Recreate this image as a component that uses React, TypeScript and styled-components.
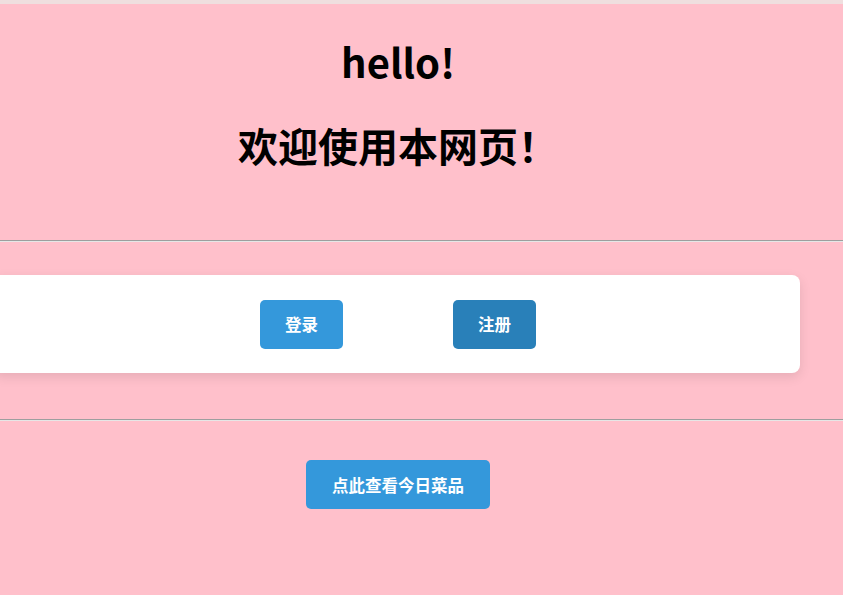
import React from 'react';
import styled, { createGlobalStyle } from 'styled-components';

const GlobalStyle = createGlobalStyle`
  html, body {
    margin: 0;
    padding: 0;
    background: pink;
    overflow: hidden;
  }
  body {
    font-family: "Noto Sans CJK SC", "Noto Sans", sans-serif;
  }
`;

const Page = styled.div`
  width: 843px;
  height: 595px;
  background: pink;
  border-top: 4px solid #efdfdf;
  box-sizing: border-box;
  overflow: hidden;
`;

const Content = styled.div`
  width: 796px;
`;

const Header = styled.header`
  padding-top: 28px;
  padding-bottom: 66px;
  text-align: center;
`;

const Title = styled.h1`
  margin: 0 0 26px;
  font-size: 40px;
  font-weight: 700;
  color: #000;
  line-height: 58px;
  &:last-child {
    margin-bottom: 0;
  }
`;

const Divider = styled.hr`
  width: 843px;
  margin: 0;
  border: none;
  border-top: 1px solid #9e9e9e;
  border-bottom: 1px solid #e6e6e6;
`;

const CardSection = styled.section`
  padding: 33px 0 46px;
`;

const Card = styled.div`
  margin-left: -7px;
  width: 807px;
  height: 98px;
  box-sizing: border-box;
  background: #fff;
  border-radius: 8px;
  box-shadow: 0 4px 12px rgba(0, 0, 0, 0.1);
  display: flex;
  align-items: center;
  justify-content: center;
  gap: 110px;
  padding-left: 3px;
`;

const Button = styled.button<{ $dark?: boolean; $wide?: boolean }>`
  height: 49px;
  width: ${p => (p.$wide ? '184px' : '83px')};
  border: none;
  border-radius: 5px;
  background: ${p => (p.$dark ? '#2980b9' : '#3498db')};
  color: #fff;
  font-family: "Noto Sans CJK SC", sans-serif;
  font-size: 16.5px;
  font-weight: 600;
  cursor: pointer;
  padding: 0;
`;

const Footer = styled.div`
  padding-top: 39px;
  display: flex;
  justify-content: center;
`;

export default function App() {
  return (
    <>
      <GlobalStyle />
      <Page>
        <Content>
          <Header>
            <Title>hello!</Title>
            <Title>欢迎使用本网页！</Title>
          </Header>
        </Content>
        <Divider />
        <Content>
          <CardSection>
            <Card>
              <Button>登录</Button>
              <Button $dark>注册</Button>
            </Card>
          </CardSection>
        </Content>
        <Divider />
        <Content>
          <Footer>
            <Button $wide>点此查看今日菜品</Button>
          </Footer>
        </Content>
      </Page>
    </>
  );
}
